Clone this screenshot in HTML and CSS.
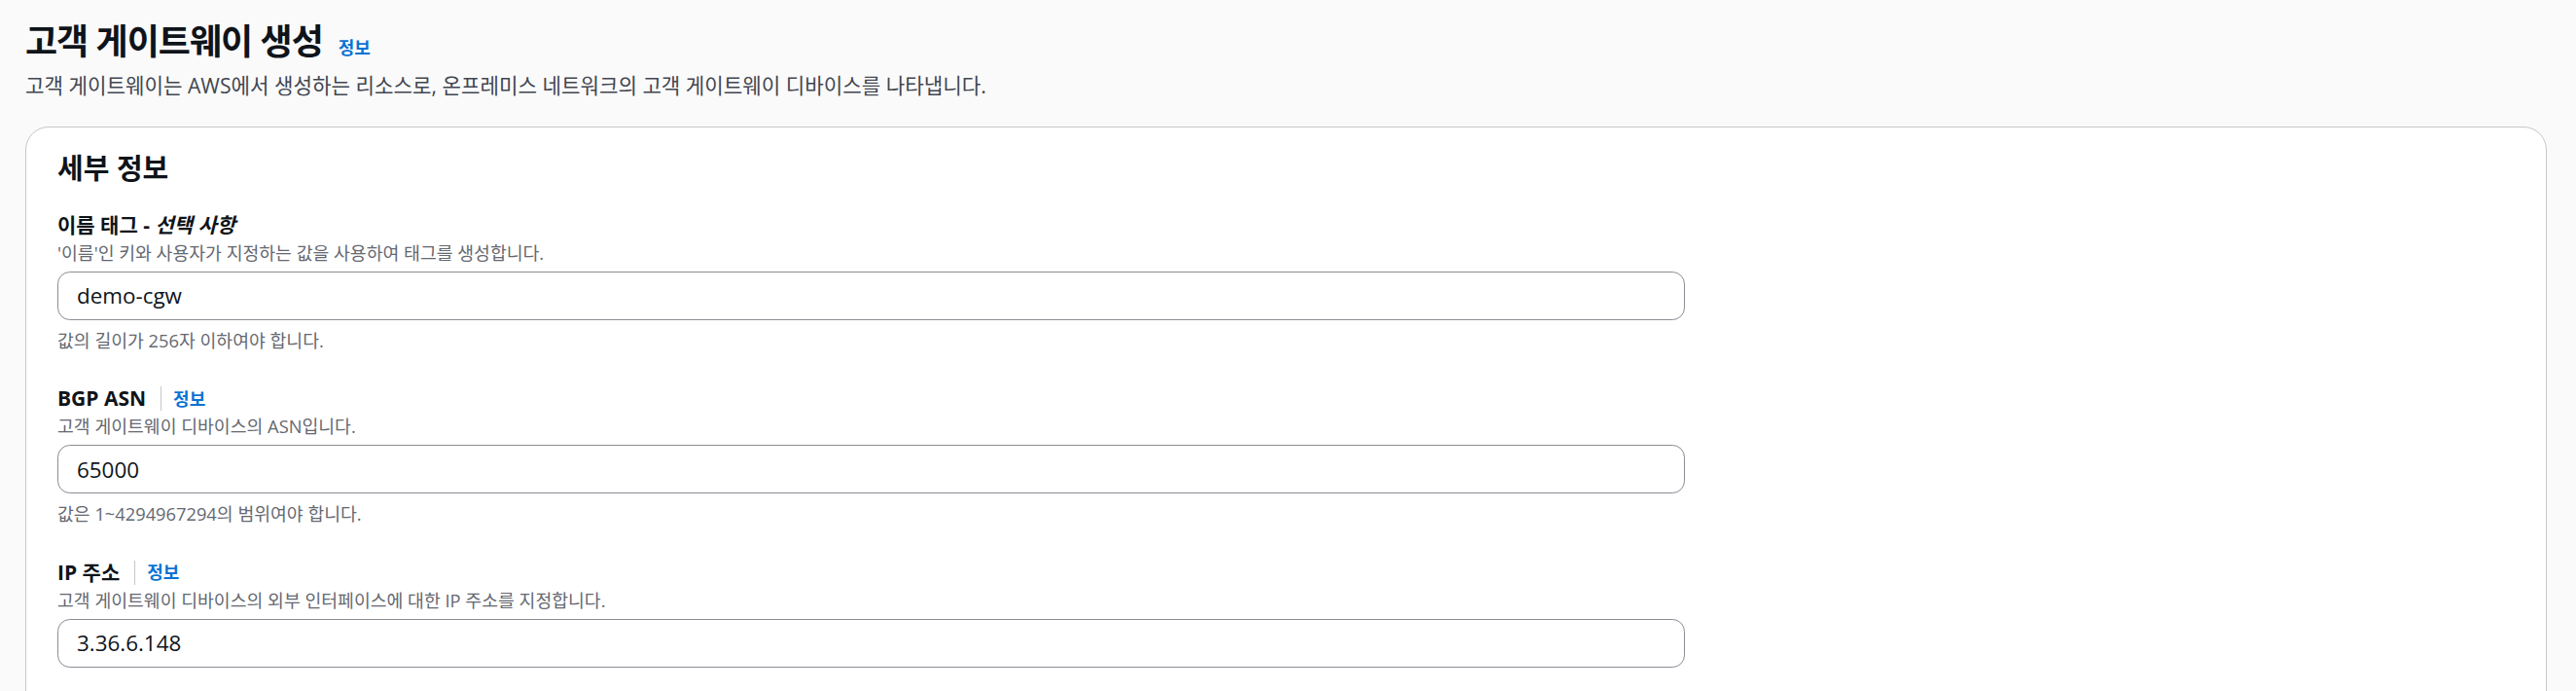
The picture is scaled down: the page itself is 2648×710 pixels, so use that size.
FILE: index.html
```html
<!DOCTYPE html>
<html lang="ko">
<head>
<meta charset="utf-8">
<title>고객 게이트웨이 생성</title>
<link rel="stylesheet" href="styles.css">
</head>
<body>
<main class="page">
  <header class="page-header">
    <div class="title-row">
      <h1 class="title">고객 게이트웨이 생성</h1>
      <a class="info-link" href="#">정보</a>
    </div>
    <p class="page-desc">고객 게이트웨이는 AWS에서 생성하는 리소스로, 온프레미스 네트워크의 고객 게이트웨이 디바이스를 나타냅니다.</p>
  </header>

  <section class="card">
    <h2 class="card-title">세부 정보</h2>
    <div class="fields">
      <div class="field">
        <div class="label-row">
          <label class="label">이름 태그 - <i class="optional">선택 사항</i></label>
        </div>
        <div class="field-desc">'이름'인 키와 사용자가 지정하는 값을 사용하여 태그를 생성합니다.</div>
        <div class="control"><input class="input" type="text" value="demo-cgw"></div>
        <div class="constraint">값의 길이가 256자 이하여야 합니다.</div>
      </div>

      <div class="field">
        <div class="label-row">
          <label class="label">BGP ASN</label>
          <span class="divider"></span>
          <a class="info-link" href="#">정보</a>
        </div>
        <div class="field-desc">고객 게이트웨이 디바이스의 ASN입니다.</div>
        <div class="control"><input class="input" type="text" value="65000"></div>
        <div class="constraint">값은 1~4294967294의 범위여야 합니다.</div>
      </div>

      <div class="field">
        <div class="label-row">
          <label class="label">IP 주소</label>
          <span class="divider"></span>
          <a class="info-link" href="#">정보</a>
        </div>
        <div class="field-desc">고객 게이트웨이 디바이스의 외부 인터페이스에 대한 IP 주소를 지정합니다.</div>
        <div class="control"><input class="input" type="text" value="3.36.6.148"></div>
      </div>
    </div>
  </section>
</main>
</body>
</html>
```

FILE: styles.css
```css
* {
  box-sizing: border-box;
}

html, body {
  margin: 0;
  padding: 0;
  background: #fafafa;
}

body {
  font-family: "Open Sans", "Noto Sans CJK KR", sans-serif;
  color: #0f141a;
  overflow: hidden;
}

.page {
  padding: 19.5px 30px 0 26px;
}

.title-row {
  display: flex;
  align-items: baseline;
  gap: 16px;
}

.title {
  margin: 0;
  font-size: 36px;
  line-height: 45px;
  font-weight: 700;
  letter-spacing: -1px;
  color: #0f141a;
}

.info-link {
  font-size: 18px;
  line-height: 24px;
  font-weight: 700;
  color: #0972d3;
  text-decoration: none;
}

.page-desc {
  margin: 8.5px 0 0;
  font-size: 21.2px;
  line-height: 30px;
  color: #424650;
}

.card {
  margin-top: 27px;
  background: #ffffff;
  border: 1px solid #c6c6cd;
  border-radius: 24px;
  padding: 24.5px 32px 60px 32px;
}

.card-title {
  margin: 0;
  font-size: 29px;
  line-height: 33px;
  font-weight: 700;
  color: #0f141a;
}

.fields {
  margin-top: 26px;
  display: flex;
  flex-direction: column;
  gap: 31.5px;
}

.field {
  display: flex;
  flex-direction: column;
}

.label-row {
  display: flex;
  align-items: center;
  height: 33px;
}

.label {
  font-size: 21px;
  line-height: 33px;
  font-weight: 700;
  color: #0f141a;
}

.optional {
  font-style: italic;
}

.divider {
  width: 0;
  height: 25px;
  border-left: 1px solid #c6c6cd;
  margin: 0 12px 0 15px;
}

.field-desc,
.constraint {
  font-size: 18.3px;
  line-height: 24px;
  color: #656871;
}

.control {
  margin-top: 7px;
}

.input {
  display: block;
  width: calc((100% + 32px) * 2 / 3 - 32px);
  height: 50px;
  border: 1px solid #8c8c94;
  border-radius: 12.8px;
  background: #ffffff;
  padding: 0 19px;
  font-family: "Open Sans", "Noto Sans CJK KR", sans-serif;
  font-size: 22.4px;
  color: #0f141a;
  outline: none;
}

.constraint {
  margin-top: 9px;
}
```
